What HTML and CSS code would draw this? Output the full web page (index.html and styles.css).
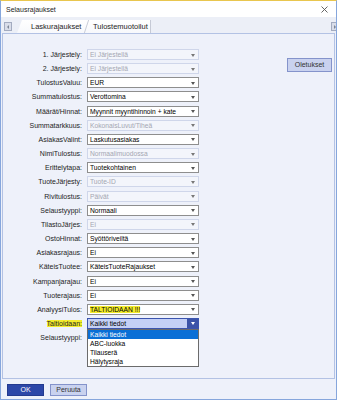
FILE: index.html
```html
<!DOCTYPE html>
<html>
	<head>
		<meta charset="utf-8">
		<title>Selausrajaukset</title>
		<link rel="stylesheet" href="styles.css">
	</head>
	<body>
		<div class="window">
			<div class="titlebar">
				<span class="title">Selausrajaukset</span>
				<svg class="close" width="7" height="7" viewBox="0 0 7 7"><path d="M0.5 0.5L6.5 6.5M6.5 0.5L0.5 6.5" stroke="#555" stroke-width="0.9" fill="none"/></svg>
			</div>
			<div class="tabstrip">
				<span class="scroll left"></span>
				<div class="tabs">
					<span class="tab first">Laskurajaukset</span>
					<span class="tab second">Tulostemuotoilut</span>
				</div>
				<span class="scroll right"></span>
			</div>
			<div class="panel">
				<div class="form">
					<label>1. Järjestely:</label><div class="combo disabled">Ei Järjestellä</div>
					<label>2. Järjestely:</label><div class="combo disabled">Ei Järjestellä</div>
					<label>TulostusValuu:</label><div class="combo">EUR</div>
					<label>Summatulostus:</label><div class="combo">Verottomina</div>
					<label>Määrät/Hinnat:</label><div class="combo">Myynnit myyntihinnoin + kate</div>
					<label>Summatarkkuus:</label><div class="combo disabled">KokonaisLuvut/Tiheä</div>
					<label>AsiakasValint:</label><div class="combo">Laskutusasiakas</div>
					<label>NimiTulostus:</label><div class="combo disabled">Normaalimuodossa</div>
					<label>Erittelytapa:</label><div class="combo">Tuotekohtainen</div>
					<label>TuoteJärjesty:</label><div class="combo disabled">Tuote-ID</div>
					<label>Rivitulostus:</label><div class="combo disabled">Päivät</div>
					<label>Selaustyyppi:</label><div class="combo">Normaali</div>
					<label>TilastoJärjes:</label><div class="combo disabled">Ei</div>
					<label>OstoHinnat:</label><div class="combo">Syöttöriveiltä</div>
					<label>Asiakasrajaus:</label><div class="combo">Ei</div>
					<label>KäteisTuotee:</label><div class="combo">KäteisTuoteRajaukset</div>
					<label>Kampanjarajau:</label><div class="combo">Ei</div>
					<label>Tuoterajaus:</label><div class="combo">Ei</div>
					<label>AnalyysiTulos:</label><div class="combo"><span class="mark">TALTIOIDAAN !!!</span></div>
					<label><span class="mark">Taltioidaan:</span></label>
					<div class="combo-wrap">
						<div class="combo open">Kaikki tiedot</div>
						<ul class="list">
							<li class="selected">Kaikki tiedot</li>
							<li>ABC-luokka</li>
							<li>Tilauserä</li>
							<li>Hälytysraja</li>
						</ul>
					</div>
					<label>Selaustyyppi:</label><div class="combo"></div>
				</div>
				<button class="btn light defaults">Oletukset</button>
			</div>
			<div class="footer">
				<button class="btn primary">OK</button>
				<button class="btn light">Peruuta</button>
			</div>
		</div>
	</body>
</html>
```

FILE: styles.css
```css
body,html{
	margin:0;
	padding:0;
	background:#fff;
}
body{
	font-family:"Liberation Sans", Arial, sans-serif;
	font-size:7px;
	color:#1d1d1d;
}
.window{
	width:335px;
	height:398px;
	border:1px solid #86a6dc;
	border-top-color:#e9c64e;
	display:flex;
	flex-direction:column;
	overflow:hidden;
	background:#eef1fa;
}
.titlebar{
	height:16px;
	flex:none;
	background:#fff;
	display:flex;
	align-items:center;
	justify-content:space-between;
	padding:0 8px 0 5px;
}
.tabstrip{
	height:16px;
	flex:none;
	background:#eceff7;
	display:flex;
	align-items:flex-end;
}
.scroll{
	width:6px;
	height:7px;
	border:1px solid #a3abc0;
	background:#d9dde9;
	margin:0 0 2px 3px;
	position:relative;
}
.scroll::after{
	content:"";
	position:absolute;
	top:1.5px;
	border-top:2px solid transparent;
	border-bottom:2px solid transparent;
}
.scroll.left::after{
	left:1.5px;
	border-right:2.5px solid #7d8597;
}
.scroll.right{
	margin:0 -3px 2px auto;
}
.scroll.right::after{
	left:2px;
	border-left:2.5px solid #7d8597;
}
.tabs{
	display:flex;
	height:13px;
	margin-left:5px;
	font-size:7.5px;
}
.tab{
	line-height:13px;
	background:linear-gradient(#fff, #f7f8fc);
	position:relative;
}
.tab.first{
	width:56px;
	padding-left:14px;
	clip-path:polygon(5px 0, 100% 0, 100% 100%, 0 100%);
}
.tab.second{
	width:57px;
	padding-left:6px;
	border-right:1px solid #c6cad6;
}
.tab.second::before{
	content:"";
	position:absolute;
	left:-1px;
	top:0;
	height:13px;
	border-left:1px solid #c9cdd8;
	transform:skewX(-18deg);
}
.panel{
	flex:1;
	margin:0 1px;
	border:1px solid #b3c2e4;
	display:flex;
	justify-content:space-between;
	align-items:flex-start;
}
.form{
	display:grid;
	grid-template-columns:79px 112px;
	grid-auto-rows:11px;
	column-gap:5px;
	row-gap:3.17px;
	padding-top:15px;
}
.form label{
	text-align:right;
	align-self:center;
	white-space:nowrap;
	line-height:9px;
}
.mark{
	background:#f3ec2c;
}
.combo{
	box-sizing:border-box;
	height:11px;
	border:1px solid #8e8e8e;
	background:#fff;
	color:#000;
	padding:0 12px 0 2px;
	font-size:6.7px;
	line-height:9px;
	white-space:nowrap;
	position:relative;
}
.combo::after{
	content:"";
	position:absolute;
	right:3px;
	top:3.5px;
	border-left:2.5px solid transparent;
	border-right:2.5px solid transparent;
	border-top:3px solid #555;
}
.combo.disabled{
	border-color:#cfd6ea;
	background:#f3f5fb;
	color:#a3a6b2;
}
.combo.disabled::after{
	border-top-color:#777;
}
.combo-wrap{
	position:relative;
}
.combo.open{
	background:#c4d0f6;
	border-color:#3b54ae;
}
.combo.open::before{
	content:"";
	position:absolute;
	right:0;
	top:0;
	width:11px;
	height:9px;
	background:#3b53a8;
}
.combo.open::after{
	border-top-color:#fff;
	right:3px;
}
.list{
	position:absolute;
	top:100%;
	left:0;
	width:112px;
	box-sizing:border-box;
	margin:0;
	padding:0;
	list-style:none;
	background:#fff;
	border:1px solid #6b6b6b;
	font-size:6.7px;
	z-index:2;
}
.list li{
	height:9px;
	line-height:9px;
	padding-left:2px;
	color:#000;
}
.list li.selected{
	background:#0a6fd6;
	color:#fff;
}
.btn{
	box-sizing:border-box;
	font-family:"Liberation Sans", Arial, sans-serif;
	font-size:7px;
	padding:0;
	width:37px;
	height:12px;
	line-height:10px;
	text-align:center;
}
.btn.light{
	background:#c9d2ef;
	border:1px solid #8493cb;
	color:#333;
}
.btn.primary{
	background:#2c47a8;
	border:1px solid #233a8f;
	color:#fff;
}
.btn.defaults{
	width:45px;
	height:14px;
	line-height:12px;
	margin:24px 2px 0 0;
}
.footer{
	height:20px;
	flex:none;
	box-sizing:border-box;
	display:flex;
	gap:6px;
	padding:5px 0 0 6px;
}
```
